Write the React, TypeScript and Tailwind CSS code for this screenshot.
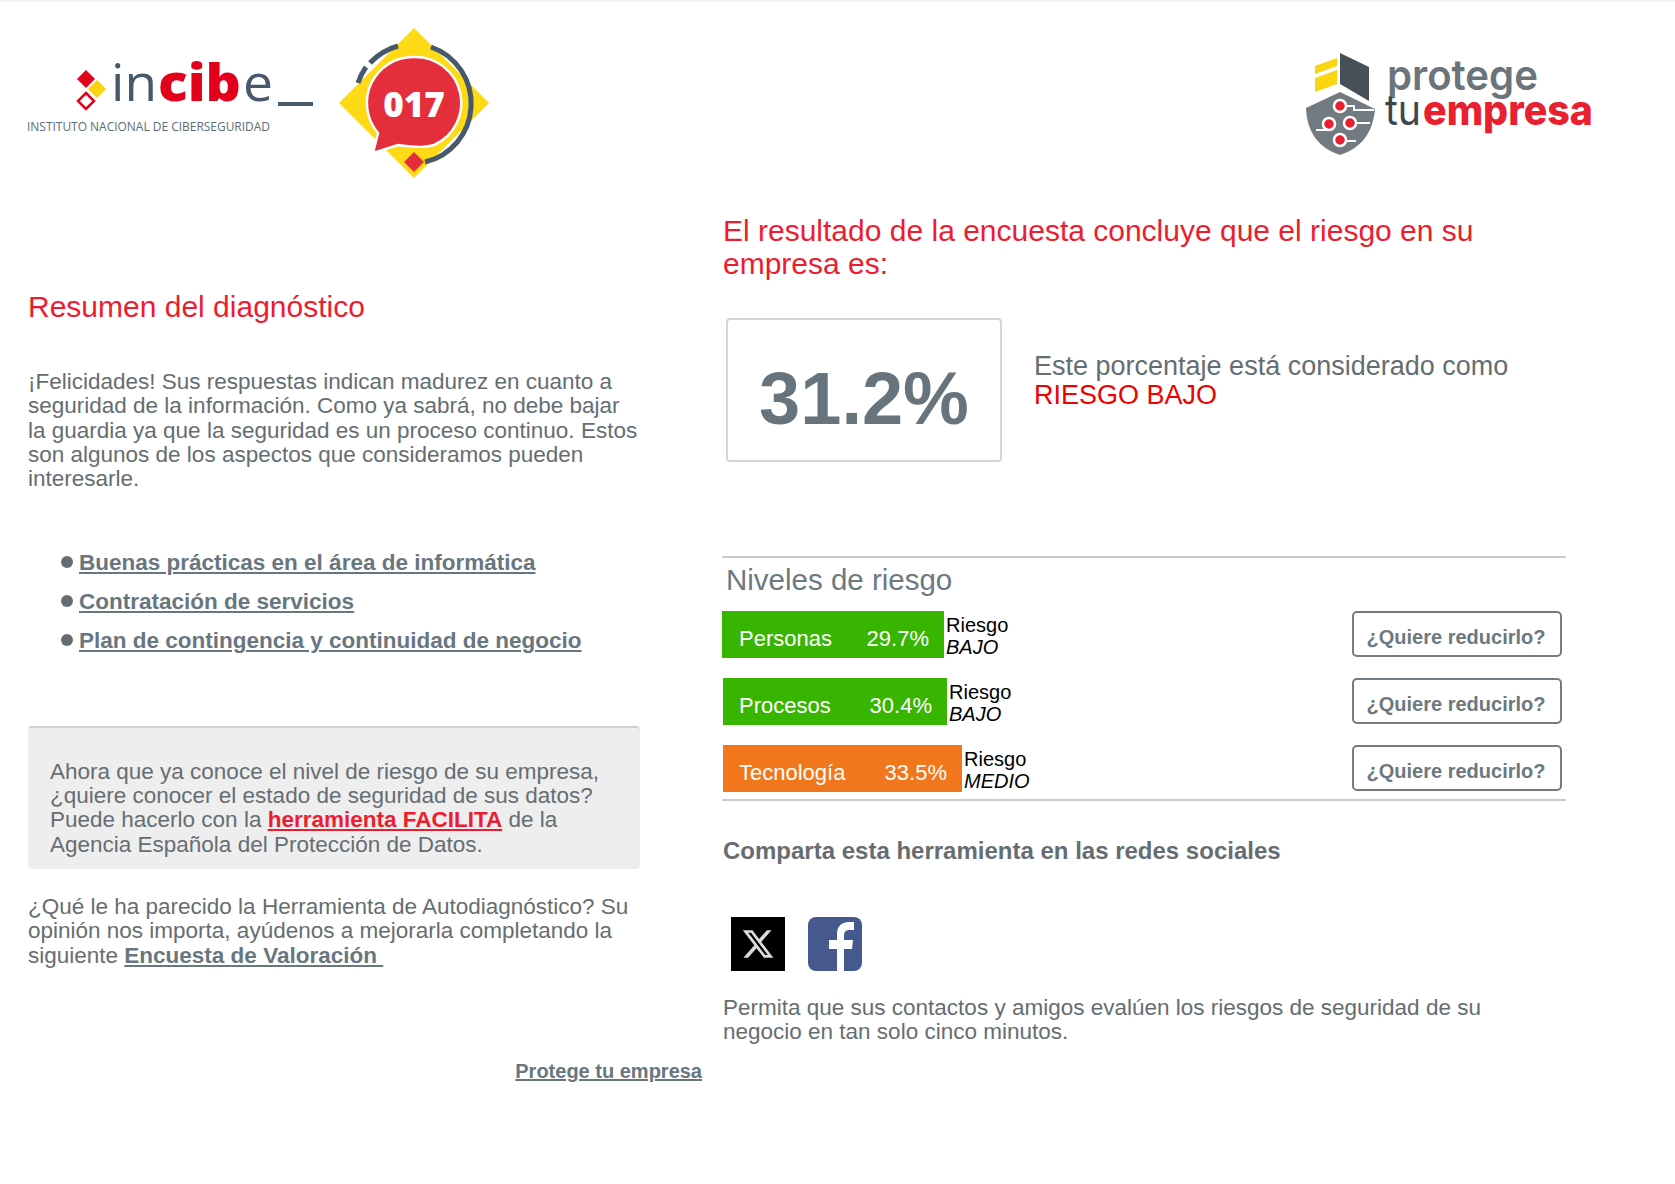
const riesgos = [
  { area: 'Personas', pct: '29.7%', nivel: 'BAJO', bar: 'w-[222px] pl-[17px] bg-[#38b500]' },
  { area: 'Procesos', pct: '30.4%', nivel: 'BAJO', bar: 'w-[224px] ml-px pl-[16px] bg-[#38b500]' },
  { area: 'Tecnología', pct: '33.5%', nivel: 'MEDIO', bar: 'w-[239px] ml-px pl-[16px] bg-[#f2761b]' },
]

const IncibeLogo = () => (
  <svg width="500" height="198" viewBox="0 0 500 198" className="block shrink-0">
    {/* rombos incibe */}
    <path d="M86 68l9 9-9 9-9-9z" fill="#e2001a" />
    <path d="M97 78l9 9-9 9-9-9z" fill="#fdd20e" />
    <path d="M86 91l8 8-8 8-8-8z" fill="#fff" stroke="#e2001a" strokeWidth="2.5" />
    <text x="111" y="99" fontSize="52" fontFamily="'Open Sans', sans-serif" fill="#47586a" textLength="46" lengthAdjust="spacingAndGlyphs">in</text>
    <text x="158" y="99" fontSize="52" fontWeight="800" fontFamily="'Open Sans', sans-serif" fill="#e2001a" textLength="83" lengthAdjust="spacingAndGlyphs">cib</text>
    <text x="243" y="99" fontSize="52" fontFamily="'Open Sans', sans-serif" fill="#47586a" textLength="30" lengthAdjust="spacingAndGlyphs">e</text>
    <rect x="278" y="100" width="35" height="4" fill="#47586a" />
    <text x="27" y="129" fontSize="13.5" fontFamily="'Open Sans', sans-serif" fill="#5d6b78" textLength="243" lengthAdjust="spacingAndGlyphs">INSTITUTO NACIONAL DE CIBERSEGURIDAD</text>

    {/* 017 */}
    <path d="M414 26l75 75-75 75-75-75z" fill="#fdd916" />
    <path d="M431 45a60 60 0 0 1 -6 115" fill="none" stroke="#47586a" strokeWidth="5" />
    <path d="M398 44a60 60 0 0 0 -28 17M366 65a60 60 0 0 0 -8 16" fill="none" stroke="#47586a" strokeWidth="5" />
    <path d="M414 55a46 46 0 0 1 20 88c-12 4-28 1-36 0l-25 8 5-20a46 46 0 0 1 36-76z" fill="#e52e3b" stroke="#fff" strokeWidth="2.5" />
    <text x="414" y="115" textAnchor="middle" fontSize="35" fontWeight="800" fontFamily="'Open Sans', sans-serif" fill="#fff">017</text>
    <path d="M414 150l10 10-10 10-10-10z" fill="#e52e3b" />
  </svg>
)

const ProtegeLogo = () => (
  <svg width="340" height="140" viewBox="0 0 340 140" className="block shrink-0">
    <path d="M60 23l29 14v34l-29-17z" fill="#474f57" />
    <path d="M35 36l22-8v8l-22 8zM35 48l22-8v8l-22 8zM35 54l22-8v8l-22 8z" fill="#fbd50f" />
    <path d="M26 78l34-16 35 17c-2 24-14 39-35 46-21-7-33-22-34-47z" fill="#737b82" />
    <path d="M60 76h14v4h20M36 100h10M70 93h20M56 111h20" stroke="#fff" strokeWidth="2" fill="none" />
    <circle cx="60" cy="76" r="6" fill="#e8202f" stroke="#fff" strokeWidth="2.5" />
    <circle cx="49" cy="94" r="6" fill="#e8202f" stroke="#fff" strokeWidth="2.5" />
    <circle cx="70" cy="93" r="6" fill="#e8202f" stroke="#fff" strokeWidth="2.5" />
    <circle cx="60" cy="110" r="6" fill="#e8202f" stroke="#fff" strokeWidth="2.5" />
    <text x="107" y="60" fontSize="42" fontWeight="600" fontFamily="Inter, sans-serif" fill="#6b747b" textLength="151" lengthAdjust="spacingAndGlyphs">protege</text>
    <text x="105" y="95" fontSize="42" fontFamily="Inter, sans-serif" fill="#3d464d" textLength="36" lengthAdjust="spacingAndGlyphs">tu</text>
    <text x="143" y="95" fontSize="42" fontWeight="800" fontFamily="Inter, sans-serif" fill="#e8202f" textLength="170" lengthAdjust="spacingAndGlyphs">empresa</text>
  </svg>
)

export default function App() {
  return (
    <div className="min-h-[1184px] bg-white font-['Liberation_Sans',Arial,sans-serif] text-[22.5px] leading-[24.3px] text-[#666d72]">
      <div className="h-[2px] bg-[#f3f3f3]" />
      <header className="flex h-[198px] items-start justify-between pr-[55px]">
        <IncibeLogo />
        <div className="pt-[28px]">
          <ProtegeLogo />
        </div>
      </header>

      <main className="flex">
        {/* columna izquierda */}
        <section className="w-[722px] shrink-0 pl-[28px] pr-[20px]">
          <h2 className="mt-[90px] text-[30px] leading-[33px] text-[#ed1c2e]">Resumen del diagnóstico</h2>
          <p className="mt-[47px] w-[612px]">
            ¡Felicidades! Sus respuestas indican madurez en cuanto a seguridad de la información. Como ya sabrá, no debe bajar la guardia ya que la seguridad es un proceso continuo. Estos son algunos de los aspectos que consideramos pueden interesarle.
          </p>
          <ul className="mt-[60px] flex flex-col gap-[14.7px] pl-[33px] font-bold text-[#687680]">
            {['Buenas prácticas en el área de informática', 'Contratación de servicios', 'Plan de contingencia y continuidad de negocio'].map((item) => (
              <li key={item} className="flex items-center gap-[6px]">
                <span className="mb-[3px] h-[12px] w-[12px] rounded-full bg-[#666d72]" />
                <a className="underline">{item}</a>
              </li>
            ))}
          </ul>
          <div className="mt-[72px] w-[612px] rounded-[4px] border-t-2 border-[#d0d0d0] bg-[#eeeeee] px-[22px] pt-[32px] pb-[12px]">
            Ahora que ya conoce el nivel de riesgo de su empresa, ¿quiere conocer el estado de seguridad de sus datos? Puede hacerlo con la <a className="font-bold text-[#ed1c2e] underline">herramienta FACILITA</a> de la Agencia Española del Protección de Datos.
          </div>
          <p className="mt-[26px] w-[612px]">
            ¿Qué le ha parecido la Herramienta de Autodiagnóstico? Su opinión nos importa, ayúdenos a mejorarla completando la siguiente <a className="font-bold text-[#687680] underline whitespace-pre">Encuesta de Valoración </a>
          </p>
          <p className="mt-[91px] text-right text-[20px] font-bold text-[#687680]">
            <a className="underline">Protege tu empresa</a>
          </p>
        </section>

        {/* columna derecha */}
        <section className="w-[844px] shrink-0">
          <h1 className="mt-[14px] ml-px text-[30px] leading-[33px] text-[#ed1c2e]">
            El resultado de la encuesta concluye que el riesgo en su empresa es:
          </h1>
          <div className="mt-[38px] flex items-start">
            <div className="ml-[4px] flex h-[144px] w-[276px] items-center justify-center rounded-[4px] border-2 border-[#d5d5d5] pt-[18px] text-[74px] font-bold text-[#68747d]">
              31.2%
            </div>
            <p className="mt-[34px] ml-[32px] text-[27px] leading-[29px]">
              Este porcentaje está considerado como
              <br />
              <span className="text-[#f00000]">RIESGO BAJO</span>
            </p>
          </div>

          <div className="mt-[94px] border-y-2 border-[#cccccc] pb-[7px]">
            <h3 className="mt-[5px] ml-[4px] text-[29.5px] leading-[34px] text-[#6d7880]">Niveles de riesgo</h3>
            <div className="mt-[14px] flex flex-col gap-[20px]">
              {riesgos.map((r) => (
                <div key={r.area} className="flex h-[47px] items-stretch">
                  <div className={`flex items-center justify-between pt-[10px] pr-[15px] text-[22px] text-white ${r.bar}`}>
                    <span>{r.area}</span>
                    <span>{r.pct}</span>
                  </div>
                  <div className="ml-[2px] pt-[3px] text-[20px] leading-[22px] text-black">
                    Riesgo
                    <br />
                    <i>{r.nivel}</i>
                  </div>
                  <button className="mr-[4px] ml-auto h-[46px] w-[210px] rounded-[5px] border-2 border-[#727c84] bg-white pt-[6px] pr-[2px] text-[20px] font-bold text-[#6d7880]">
                    ¿Quiere reducirlo?
                  </button>
                </div>
              ))}
            </div>
          </div>

          <h3 className="mt-[36px] ml-px text-[24px] leading-[28px] font-bold text-[#666d72]">Comparta esta herramienta en las redes sociales</h3>
          <div className="mt-[52px] ml-[9px] flex items-start gap-[23px]">
            <div className="flex h-[54px] w-[54px] items-center justify-center bg-black">
              <svg viewBox="0 0 24 24" width="34" height="34" fill="#dcdcdc">
                <path d="M18.244 2.25h3.308l-7.227 8.26 8.502 11.24H16.17l-5.214-6.817L4.99 21.75H1.68l7.73-8.835L1.254 2.25H8.08l4.713 6.231zm-1.161 17.52h1.833L7.084 4.126H5.117z" />
              </svg>
            </div>
            <div className="h-[54px] w-[54px] overflow-hidden rounded-[8px] bg-[#46598f]">
              <svg viewBox="0 0 54 54" width="54" height="54" fill="#fff">
                <path d="M29 54V32h-8v-9h8v-6c0-8 5-12 12-12h5v8h-4c-4 0-6 2-6 5v5h9l-1 9h-8v22z" />
              </svg>
            </div>
          </div>
          <p className="mt-[25px] ml-px w-[800px]">
            Permita que sus contactos y amigos evalúen los riesgos de seguridad de su negocio en tan solo cinco minutos.
          </p>
        </section>
      </main>
    </div>
  )
}
